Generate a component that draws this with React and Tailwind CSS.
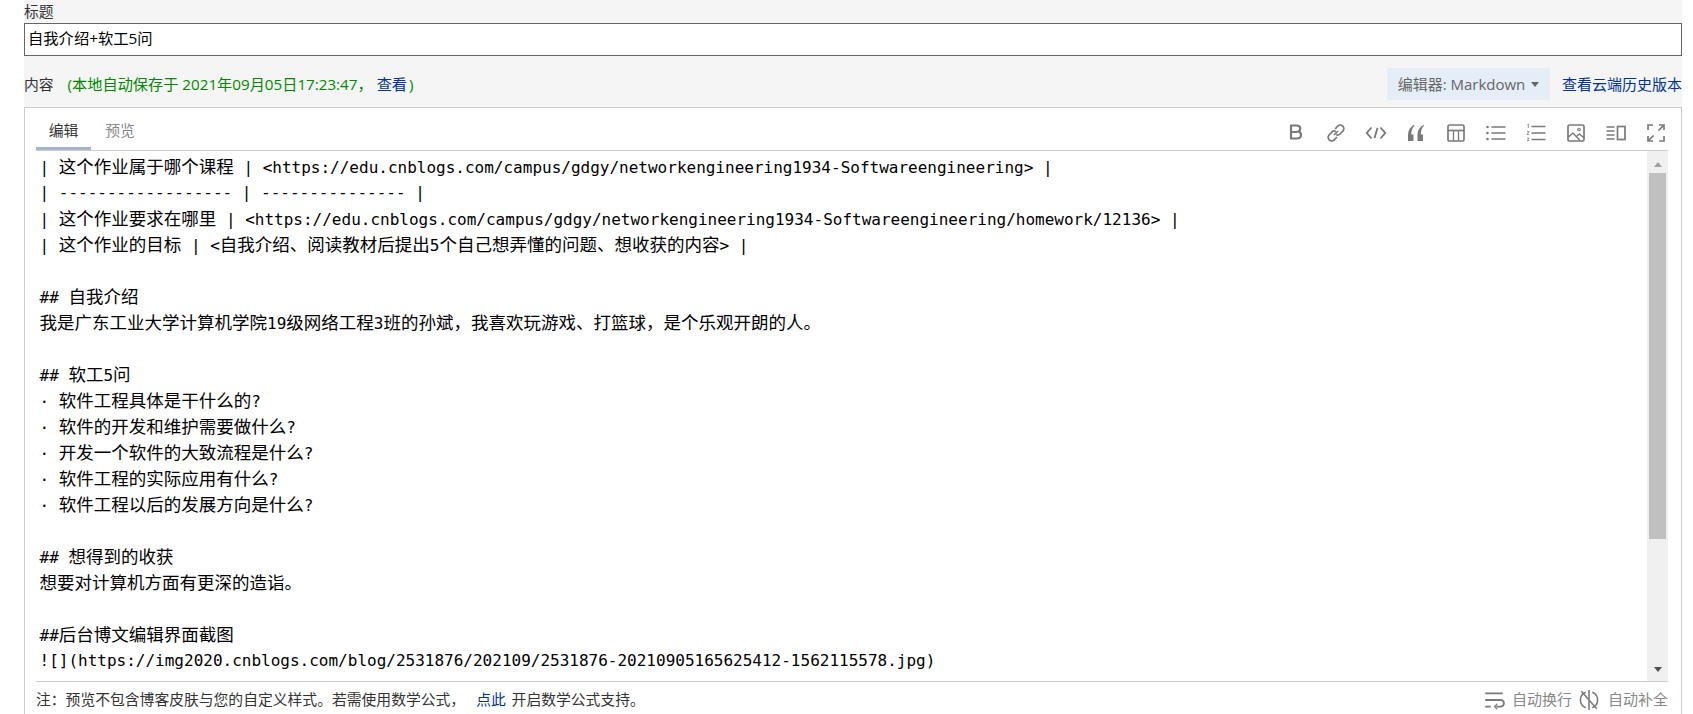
const lines = [
  "| 这个作业属于哪个课程 | <https://edu.cnblogs.com/campus/gdgy/networkengineering1934-Softwareengineering> |",
  "| ------------------ | --------------- |",
  "| 这个作业要求在哪里 | <https://edu.cnblogs.com/campus/gdgy/networkengineering1934-Softwareengineering/homework/12136> |",
  "| 这个作业的目标 | <自我介绍、阅读教材后提出5个自己想弄懂的问题、想收获的内容> |",
  "",
  "## 自我介绍",
  "我是广东工业大学计算机学院19级网络工程3班的孙斌，我喜欢玩游戏、打篮球，是个乐观开朗的人。",
  "",
  "## 软工5问",
  "· 软件工程具体是干什么的?",
  "· 软件的开发和维护需要做什么?",
  "· 开发一个软件的大致流程是什么?",
  "· 软件工程的实际应用有什么?",
  "· 软件工程以后的发展方向是什么?",
  "",
  "## 想得到的收获",
  "想要对计算机方面有更深的造诣。",
  "",
  "##后台博文编辑界面截图",
  "![](https://img2020.cnblogs.com/blog/2531876/202109/2531876-20210905165625412-1562115578.jpg)",
];

// latin runs are narrower than the cjk ones, so size them apart
const CodeLine = ({ text }) => {
  const parts = text.split(/([\u3000-\u303f\u4e00-\u9fff\uff00-\uffef]+)/);
  return (
    <div className="h-[26px] leading-[26px] whitespace-pre">
      {parts.map((part, i) =>
        i % 2 === 1 ? (
          <span key={i} className="text-[17.5px] font-['Noto_Sans_CJK_SC',sans-serif]">{part}</span>
        ) : (
          <span key={i} className="text-[16px] font-['DejaVu_Sans_Mono',monospace]">{part}</span>
        )
      )}
    </div>
  );
};

const Icon = ({ children, className = "w-[20px] h-[20px]" }) => (
  <svg viewBox="0 0 20 20" fill="none" stroke="#7a7a7a" strokeWidth="1.7" className={className}>
    {children}
  </svg>
);

const toolbarIcons = [
  <Icon key="bold">
    <path d="M5 2.500h5.500c2.300 0 3.700 1.100 3.700 3.100 0 1.500-.8 2.500-2 2.900 1.700.4 2.800 1.600 2.800 3.300 0 2.400-1.700 3.700-4.200 3.700H5z" strokeWidth="2.200" />
    <path d="M6 9h5" strokeWidth="2" />
  </Icon>,
  <Icon key="link">
    <path d="M8 12l4-4" />
    <path d="M9 6l2.800-2.800a3.300 3.300 0 0 1 5 5L14 11a3.300 3.300 0 0 1-3.800.6" />
    <path d="M11 14l-2.800 2.800a3.300 3.300 0 0 1-5-5L6 9a3.300 3.300 0 0 1 3.800-.6" />
  </Icon>,
  <Icon key="code">
    <path d="M5.500 4.500L0.800 10l4.700 5.500M14.500 4.500l4.700 5.500-4.700 5.500" strokeWidth="1.900" />
    <path d="M11.500 5l-3 10" strokeWidth="1.900" />
  </Icon>,
  <svg key="quote" viewBox="0 0 20 20" fill="#7a7a7a" className="w-[20px] h-[20px]">
    <path d="M2 18v-6C2 7.500 4.200 4 8 1.800l.5.800C6.200 5 5.300 8 5.300 11.500H7.500V18zM11.500 18v-6c0-4.500 2.200-8 6-10.200l.5.800c-2.300 2.400-3.200 5.400-3.200 8.900H17V18z" />
  </svg>,
  <Icon key="table">
    <rect x="2" y="2" width="16" height="16" rx="1.500" />
    <path d="M2 7.500h16" />
    <path d="M7.500 7.500V18M12.500 7.500V18" strokeWidth="1.300" />
  </Icon>,
  <Icon key="ul">
    <path d="M5.500 4h14M5.500 10h14M5.500 16h14" />
    <circle cx="1.500" cy="4" r="1.300" fill="#7a7a7a" stroke="none" />
    <circle cx="1.500" cy="10" r="1.300" fill="#7a7a7a" stroke="none" />
    <circle cx="1.500" cy="16" r="1.300" fill="#7a7a7a" stroke="none" />
  </Icon>,
  <Icon key="ol">
    <path d="M5.500 3.500h14M5.500 10h14M5.500 16.500h14" />
    <path d="M1.500 1.500l.8-.5v4M1 8.500h2l-2 3h2M1 15h2l-1 1.300 1 1.200H1" strokeWidth=".8" />
  </Icon>,
  <Icon key="image">
    <rect x="2" y="2" width="16" height="16" rx="1.500" />
    <path d="M2.500 14l4.500-4 7 7.500M11 13l2.500-2 4.500 4" strokeWidth="1.400" />
    <circle cx="13" cy="6.500" r="1.300" strokeWidth="1.100" />
  </Icon>,
  <Icon key="split">
    <path d="M.5 4h8M.5 8h8M.5 12h8M.5 16h8" strokeWidth="1.500" />
    <rect x="11.500" y="3.500" width="7.500" height="13" />
  </Icon>,
  <Icon key="fullscreen">
    <path d="M2 7V2h5M13 2h5v5M18 13v5h-5M7 18H2v-5" />
    <path d="M2.500 17.500l5-5M17.500 2.500l-5 5" />
  </Icon>,
];

export default function App() {
  return (
    <div className="h-[714px] overflow-hidden bg-white pl-[24px] pr-[11px] text-[14.8px] text-[#333] font-['Open_Sans','Noto_Sans_CJK_SC',sans-serif]">
      <div className="h-full bg-[#f5f5f5]">
        <div className="h-[23px] leading-[22px]">标题</div>
        <div className="h-[33px] border border-[#666] bg-white pl-[3px] text-[15.300px] leading-[29px] text-black">
          自我介绍+软工5问
        </div>
        <div className="flex h-[51px] items-center justify-between pt-[5px]">
          <div className="flex">
            <span>内容</span>
            <span className="ml-[14px] text-[15.200px] text-[#080]">
              (本地自动保存于 2021年09月05日17:23:47，
              <a className="ml-[4px] mr-[2px] text-[#039]">查看</a>)
            </span>
          </div>
          <div className="flex items-center">
            <div className="flex h-[32px] w-[163px] items-center justify-center bg-[#e5edf6] text-[15px] text-[#666]">
              编辑器: Markdown
              <span className="ml-[6px] h-0 w-0 border-x-[4px] border-t-[5px] border-x-transparent border-t-[#666]"></span>
            </div>
            <a className="ml-[12px] whitespace-nowrap text-[15px] text-[#039]">查看云端历史版本</a>
          </div>
        </div>
        <div className="h-[620px] border border-[#ccc] bg-white pl-[11px] pr-[13px]">
          <div className="flex h-[43px] items-end justify-between border-b border-[#ccc]">
            <div className="flex">
              <div className="h-[37px] w-[55px] border-b-[3px] border-[#a3b4cc] text-center leading-[34px]">编辑</div>
              <div className="h-[37px] w-[58px] text-center leading-[34px] text-[#888]">预览</div>
            </div>
            <div className="mr-[2px] flex h-[42px] items-center gap-[20px] pt-[8px]">
              {toolbarIcons}
            </div>
          </div>
          <div className="flex h-[531px] border-b border-[#ccc]">
            <div className="flex-1 overflow-hidden pl-[3.500px] pt-[2px] text-black">
              {lines.map((line, i) => (
                <CodeLine key={i} text={line} />
              ))}
            </div>
            <div className="flex w-[21px] flex-col items-center bg-[#f0f0f0]">
              <div className="mt-[11px] h-0 w-0 border-x-[4px] border-b-[5px] border-x-transparent border-b-[#a0a0a0]"></div>
              <div className="mt-[6px] h-[366px] w-[17px] bg-[#c0c0c0]"></div>
              <div className="mt-auto mb-[9px] h-0 w-0 border-x-[4px] border-t-[5px] border-x-transparent border-t-[#505050]"></div>
            </div>
          </div>
          <div className="flex h-[31px] items-center justify-between pt-[4px]">
            <div>
              注：预览不包含博客皮肤与您的自定义样式。若需使用数学公式，
              <a className="ml-[11px] mr-[2px] text-[#039]">点此</a> 开启数学公式支持。
            </div>
            <div className="flex items-center text-[15px] text-[#888]">
              <Icon className="h-[22px] w-[22px]">
                <path d="M2 4h16M2 10h14a2.500 2.500 0 0 1 0 6h-4M2 16h5" />
                <path d="M13 13.500L10.500 16l2.500 2.500" strokeWidth="1.200" />
              </Icon>
              <span className="ml-[7px]">自动换行</span>
              <Icon className="ml-[6px] h-[22px] w-[22px]">
                <path d="M7 3a7.500 7.500 0 0 0 0 14M13 3a7.500 7.500 0 0 1 0 14M10 1v18M3 2l14 16" strokeWidth="1.400" />
              </Icon>
              <span className="ml-[8px]">自动补全</span>
            </div>
          </div>
        </div>
      </div>
    </div>
  );
}
